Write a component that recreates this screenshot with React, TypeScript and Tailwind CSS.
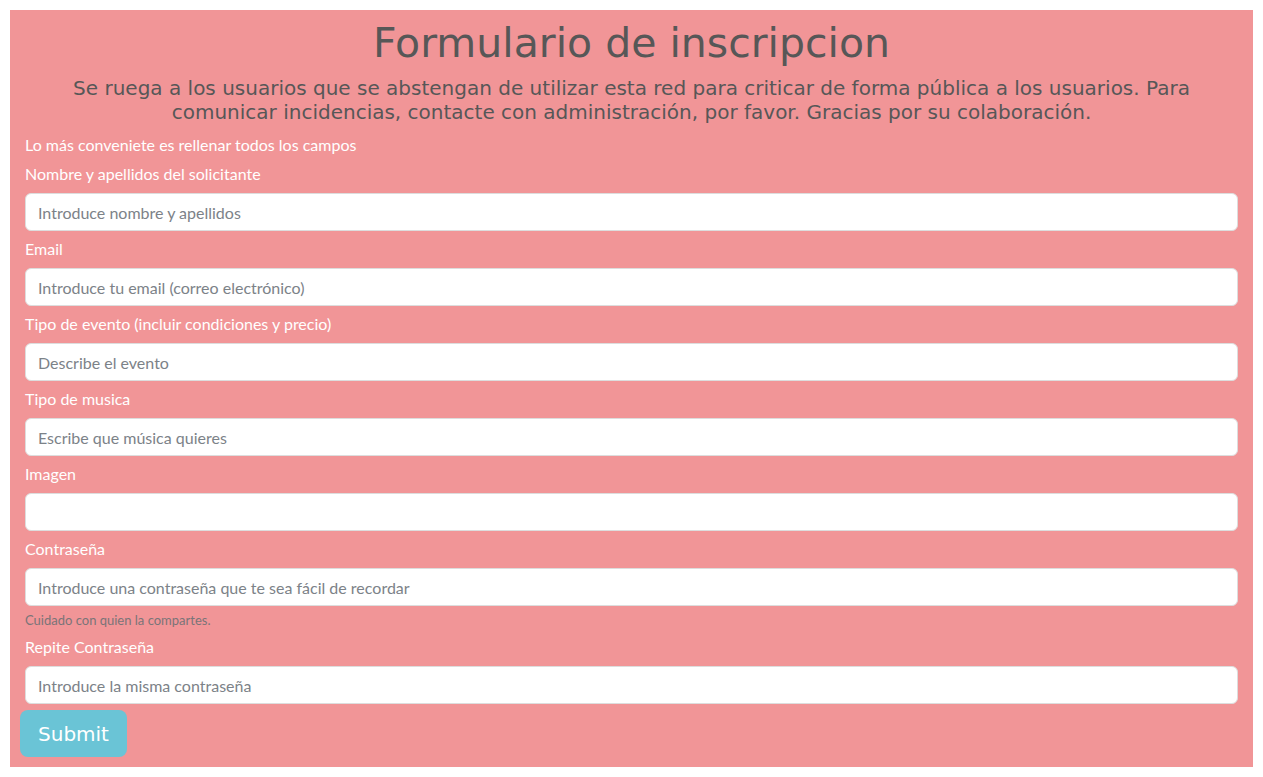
import React from 'react';

interface FieldProps {
  label: string;
  placeholder?: string;
  type?: string;
  help?: string;
}

const Field: React.FC<FieldProps> = ({ label, placeholder, type = 'text', help }) => {
  return (
    <div className="mt-[6px]">
      <label className="block h-6 leading-6 text-[16px] text-white mb-[7px]">{label}</label>
      <input
        type={type}
        placeholder={placeholder}
        className="block w-full h-[38px] px-3 rounded-[6px] bg-white border border-[#ddd] text-[16px] text-[#495057] placeholder:text-[#7c8288] outline-none"
      />
      {help && <small className="block mt-[4px] h-5 leading-5 text-[13px] text-[#7a7478]">{help}</small>}
    </div>
  );
};

export default function App() {
  return (
    <div className="bg-white p-[10px] min-h-[777px]" style={{ fontFamily: 'Lato, "Noto Sans", sans-serif' }}>
      <div className="bg-[#f19597] px-[15px] pb-[10px]">
        <h1
          className="text-center text-[41px] leading-[50px] pt-[8px] text-[#575757]"
          style={{ fontFamily: '"DejaVu Sans", "Open Sans", sans-serif' }}
        >
          Formulario de inscripcion
        </h1>
        <p
          className="text-center text-[20px] leading-6 mt-[8px] text-[#575757] px-[30px]"
          style={{ fontFamily: '"DejaVu Sans", "Open Sans", sans-serif' }}
        >
          Se ruega a los usuarios que se abstengan de utilizar esta red para criticar de forma pública a los usuarios. Para
          comunicar incidencias, contacte con administración, por favor. Gracias por su colaboración.
        </p>
        <form>
          <p className="h-6 leading-6 mt-[9px] text-[16px] text-white">Lo más conveniete es rellenar todos los campos</p>
          <div className="-mt-[1px]">
            <Field label="Nombre y apellidos del solicitante" placeholder="Introduce nombre y apellidos" />
          </div>
          <Field label="Email" type="email" placeholder="Introduce tu email (correo electrónico)" />
          <Field label="Tipo de evento (incluir condiciones y precio)" placeholder="Describe el evento" />
          <Field label="Tipo de musica" placeholder="Escribe que música quieres" />
          <Field label="Imagen" />
          <Field
            label="Contraseña"
            type="password"
            placeholder="Introduce una contraseña que te sea fácil de recordar"
            help="Cuidado con quien la compartes."
          />
          <div className="-mt-[1px]">
            <Field label="Repite Contraseña" type="password" placeholder="Introduce la misma contraseña" />
          </div>
          <button
            type="submit"
            className="block mt-[6px] -ml-[5px] w-[107px] h-[47px] rounded-[8px] bg-[#6ac4d6] text-white text-[20px]"
            style={{ fontFamily: '"DejaVu Sans", "Open Sans", sans-serif' }}
          >
            Submit
          </button>
        </form>
      </div>
    </div>
  );
}
